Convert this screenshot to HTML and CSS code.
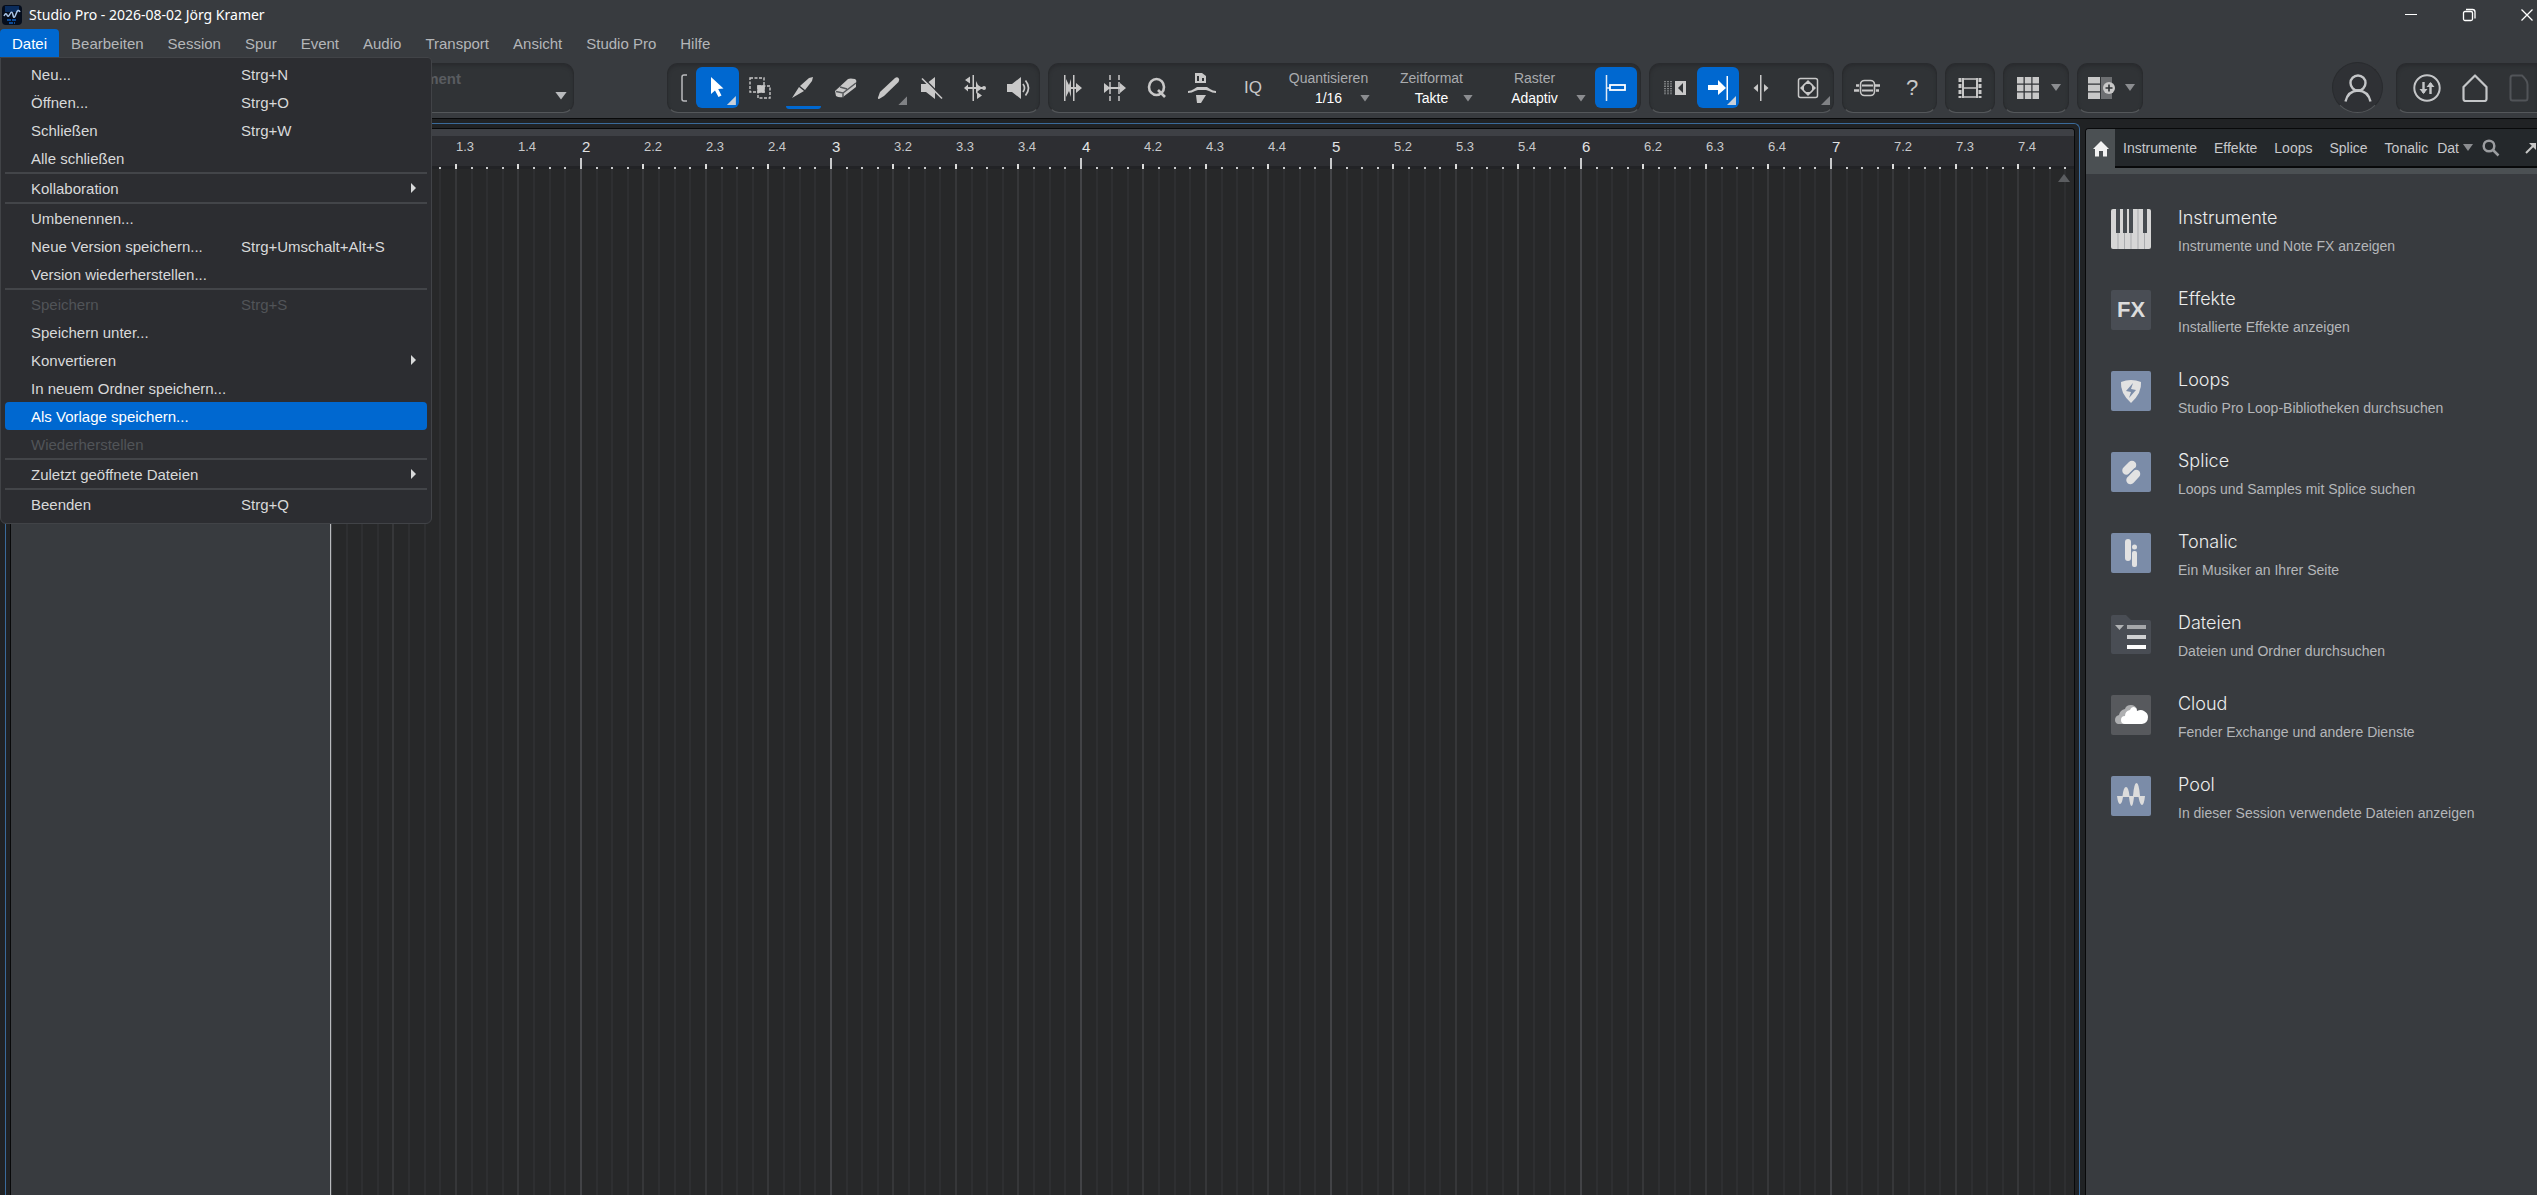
FILE: index.html
```html
<!DOCTYPE html>
<html lang="de">
<head>
    <meta charset="UTF-8">
    <title>Studio Pro - 2026-08-02 Jörg Kramer</title>
    <link rel="stylesheet" href="styles.css">
</head>
<body>

<header class="titlebar">
    <svg class="app_icon" width="20" height="20" viewBox="0 0 20 20">
        <rect width="20" height="20" rx="4" fill="#050d1c"/>
        <rect x="3" y="1" width="14" height="6" fill="#0a2c5c"/>
        <path d="M2 11q2-4 3-1t3-1 3 1 3-1 4-2" fill="none" stroke="#a9c4e6" stroke-width="1.500"/>
        <path d="M5 15h10M7 18h6" stroke="#0b4a98" stroke-width="2" stroke-dasharray="4 1"/>
    </svg>
    <span class="title">Studio Pro - 2026-08-02 Jörg Kramer</span>
    <div class="window_buttons">
        <button aria-label="Minimieren"><svg width="14" height="14" viewBox="0 0 14 14"><path d="M1 6.500h12" stroke="#fff"/></svg></button>
        <button aria-label="Verkleinern"><svg width="14" height="14" viewBox="0 0 14 14" fill="none" stroke="#fff" stroke-width="1.300"><rect x="1.500" y="3.500" width="9" height="9" rx="1.500"/><path d="M4 1.500h6.500q2.500 0 2.500 2.500v6.500"/></svg></button>
        <button aria-label="Schließen"><svg width="14" height="14" viewBox="0 0 14 14"><path d="M1.500 1.500l11 11M12.500 1.500l-11 11" stroke="#fff" stroke-width="1.300"/></svg></button>
    </div>
</header>

<nav class="menubar">
    <button class="open">Datei</button>
    <button>Bearbeiten</button>
    <button>Session</button>
    <button>Spur</button>
    <button>Event</button>
    <button>Audio</button>
    <button>Transport</button>
    <button>Ansicht</button>
    <button>Studio Pro</button>
    <button>Hilfe</button>

    <div class="menu" id="file_menu"></div>
</nav>

<div class="toolbar">
    <button class="group instrument"><span>Instrument</span><i class="arrow light"></i></button>

    <div class="group tools">
        <svg class="bracket" width="6" height="28" viewBox="0 0 6 28"><path d="M6 1H3Q1 1 1 3v22q0 2 2 2h3" fill="none" stroke="#b9bbbd" stroke-width="1.500"/></svg>
        <button class="tool active corner" aria-label="Pfeil"><svg width="24" height="24" viewBox="0 0 24 24"><path d="M6 1v17l4-3.500 3.500 6.500 3-1.500-3.300-6.500 5.300-.6z" fill="#fff"/></svg></button>
        <button class="tool" aria-label="Bereich"><svg width="22" height="22" viewBox="0 0 22 22" fill="none" stroke="#c8c8c8" stroke-width="1.400"><path d="M1 1h14v14H1zM9 9h12v12H9z" stroke-dasharray="3 1.500"/><path d="M9 9h6v6H9z" fill="#c8c8c8"/></svg></button>
        <button class="tool used" aria-label="Teilen"><svg width="24" height="24" viewBox="0 0 24 24" fill="#c8c8c8"><path d="M1 22l7-11 5 4zM9 10l9-8 4-1-1 4-7 9z"/></svg></button>
        <button class="tool" aria-label="Radierer"><svg width="24" height="24" viewBox="0 0 24 24"><path d="M1 15L14 3q2-1 7 0 2 1 1 4v4L9 21q-4 1-7-1z" fill="#c8c8c8"/><path d="M2 15.500l7 1.500L22 7M9 17v4.500M6 11l7 2" fill="none" stroke="#55585b" stroke-width="1.500"/></svg></button>
        <button class="tool corner" aria-label="Stift"><svg width="24" height="24" viewBox="0 0 24 24" fill="#c8c8c8"><path d="M3 16L18 2q2-1.500 3.500 0T21.500 6L7 20l-5 3q-1.500 0-1-1.500z"/></svg></button>
        <button class="tool" aria-label="Stummschalten"><svg width="24" height="24" viewBox="0 0 24 24" fill="#c8c8c8"><path d="M1 8h5l9-7v22l-9-7H1z"/><path d="M3 1.500l20 20" stroke="#303336" stroke-width="1.500"/><path d="M2 2.500l20 20" stroke="#c8c8c8" stroke-width="1.600"/></svg></button>
        <button class="tool" aria-label="Bend"><svg width="24" height="26" viewBox="0 0 24 26" fill="#c8c8c8"><path d="M9.500 0h1.500v26h-1.500zM2 5l5-3.500v7zM19 20.500l-5-3.500v7zM3 12h18v2H3zM5 9.500v7L1 13z"/><path d="M13 6l2 4 3 2v2l-3 2-2 3z"/><circle cx="21" cy="13" r="2"/></svg></button>
        <button class="tool" aria-label="Anhören"><svg width="24" height="24" viewBox="0 0 24 24"><path d="M1 8h5l9-7v22l-9-7H1z" fill="#c8c8c8"/><path d="M17 8q3 4 0 8M19.500 4.500q6 7.500 0 15" fill="none" stroke="#c8c8c8" stroke-width="1.700"/></svg></button>
    </div>

    <div class="group quantize">
        <button class="tool" aria-label="Start quantisieren"><svg width="20" height="26" viewBox="0 0 20 26" fill="#c8c8c8"><path d="M1 0h1.500v26H1zM10 0h1.500v26H10z"/><path d="M3 4l3 6v6l-3 6zM8 4v18l-2-6v-6z"/><path d="M6 12h7V8l6 5-6 5v-4H6z"/></svg></button>
        <button class="tool" aria-label="Ende quantisieren"><svg width="24" height="26" viewBox="0 0 24 26" fill="#c8c8c8"><path d="M7 0v26M16 0v26" stroke="#c8c8c8" stroke-width="1.500" stroke-dasharray="5 2"/><path d="M1 8l5 4h11V8l6 5-6 5v-4H6l-5 4z"/></svg></button>
        <button class="tool" aria-label="Quantisieren"><svg width="20" height="22" viewBox="0 0 20 22" fill="none" stroke="#c8c8c8" stroke-width="2.600"><ellipse cx="9.500" cy="10" rx="7.500" ry="8"/><path d="M11 13l7 7"/></svg></button>
        <button class="tool wide" aria-label="Groove"><svg width="28" height="30" viewBox="0 0 28 30" fill="#c8c8c8"><path d="M7 0h7l4 3v7H7z"/><path d="M9 3h2v5H9zM14 5h2v3h-2z" fill="#303336"/><path d="M0 20v-2q3 0 6-2l3-2h10l3 2q3 2 6 2v2q-4 0-7-2l-3-1h-8l-3 1q-3 2-7 2zM8 22h10l-5 8H9z"/></svg></button>
        <button class="tool wide iq">IQ</button>
        <div class="param"><label for="quant">Quantisieren</label><select id="quant"><option>1/16</option></select><i class="arrow"></i></div>
        <div class="param"><label for="timeformat">Zeitformat</label><select id="timeformat"><option>Takte</option></select><i class="arrow"></i></div>
        <div class="param raster"><label for="snapmode">Raster</label><select id="snapmode"><option>Adaptiv</option></select><i class="arrow"></i></div>
        <button class="tool active" aria-label="Einrasten"><svg width="24" height="26" viewBox="0 0 24 26"><path d="M2.500 0v26M2 13h5" stroke="#dfe9f5" stroke-width="1.500"/><rect x="6" y="10" width="15" height="5" fill="#0068d0" stroke="#fff" stroke-width="1.800"/></svg></button>
    </div>

    <div class="group nav_tools">
        <button class="tool" aria-label="Autoscroll"><svg width="22" height="16" viewBox="0 0 22 16"><path d="M1 1v14M4 1v14M7 1v14" stroke="#a9abad" stroke-width="1.300" stroke-dasharray="1.300 1"/><path d="M11 1h11v14H11z" fill="#c8c8c8"/><path d="M19 3v10l-5-5z" fill="#303336"/></svg></button>
        <button class="tool active corner" aria-label="Cursor folgt"><svg width="24" height="26" viewBox="0 0 24 26" fill="#fff"><path d="M2 10h10V5l8 8-8 7v-5H2z"/><path d="M20.500 1h1.500v24h-1.500z"/></svg></button>
        <button class="tool" aria-label="Ausrichten"><svg width="16" height="26" viewBox="0 0 16 26" fill="#c8c8c8"><path d="M7 0h1.500v26H7zM5 9v8l-4.500-4zM11 9v8l4.500-4z"/></svg></button>
        <button class="tool corner wide" aria-label="Zoom"><svg width="22" height="22" viewBox="0 0 22 22" fill="none" stroke="#c8c8c8" stroke-width="1.500"><rect x="1.500" y="1.500" width="19" height="19" rx="2"/><path d="M11 3l4 4H7zM11 19l4-4H7zM3 11l4-4v8zM19 11l-4-4v8z" fill="#c8c8c8" stroke="none"/><circle cx="11" cy="11" r="5"/></svg></button>
    </div>

    <div class="group help">
        <button class="tool wide" aria-label="Makros"><svg width="28" height="18" viewBox="0 0 28 18" fill="none" stroke="#c8c8c8" stroke-width="1.600"><rect x="7.500" y="1.500" width="14" height="15" rx="4"/><path d="M9 6.500h11M9 11.500h11" stroke-width="2"/><path d="M1 11.500h5M22 6.500h5M23 11.500h3M3 6.500h3" stroke-width="2.500"/></svg></button>
        <button class="tool question">?</button>
    </div>

    <div class="group single">
        <button class="tool" aria-label="Video"><svg width="24" height="22" viewBox="0 0 24 22" fill="none" stroke="#c8c8c8"><path d="M5 2h14M5 11h14M5 20h14" stroke-width="1.600"/><path d="M5 1v20M19 1v20" stroke-width="2"/><path d="M2 1v20M22 1v20" stroke-width="3" stroke-dasharray="4 2"/></svg></button>
    </div>

    <div class="group layout">
        <button class="tool" aria-label="Raster-Ansicht"><svg width="22" height="22" viewBox="0 0 22 22" fill="#c8c8c8"><path d="M0 0h6.500v6.500H0zM7.800 0h6.500v6.500H7.800zM15.500 0H22v6.500h-6.500zM0 7.800h6.500v6.500H0zM7.800 7.800h6.500v6.500H7.800zM15.500 7.800H22v6.500h-6.500zM0 15.500h6.500V22H0zM7.800 15.500h6.500V22H7.800zM15.500 15.500H22V22h-6.500z"/></svg></button>
        <i class="arrow"></i>
    </div>

    <div class="group layout">
        <button class="tool" aria-label="Spur hinzufügen"><svg width="28" height="22" viewBox="0 0 28 22"><path d="M13 0h11v22H13z" fill="#6d6f72"/><path d="M0 0h12v6.500H0zM0 7.800h12v6.500H0zM0 15.500h12V22H0z" fill="#c8c8c8"/><circle cx="21" cy="11" r="6" fill="#c8c8c8"/><path d="M21 7.500v7M17.500 11h7" stroke="#303336" stroke-width="1.600"/></svg></button>
        <i class="arrow"></i>
    </div>

    <button class="user" aria-label="Benutzer"><svg width="30" height="30" viewBox="0 0 30 30" fill="none" stroke="#c4c6c8" stroke-width="2.400"><circle cx="15" cy="10" r="7.500"/><path d="M2.500 28.500Q5 18 15 17.500 25 18 27.500 28.500"/></svg></button>

    <div class="group pages">
        <button aria-label="Übertragen"><svg width="28" height="28" viewBox="0 0 28 28" fill="none" stroke="#c4c6c8" stroke-width="2"><circle cx="14" cy="14" r="12.700"/><path d="M10.500 8v11M17.500 20V9" stroke-width="2.400"/><path d="M6.500 15h8l-4 5zM13.500 13h8l-4-5z" fill="#c4c6c8" stroke="none"/></svg></button>
        <button aria-label="Start"><svg width="28" height="28" viewBox="0 0 28 28" fill="none" stroke="#c4c6c8" stroke-width="2.200"><path d="M14 1.500L2.500 13v12q0 2 2 2h19q2 0 2-2V13z" stroke-linejoin="round"/></svg></button>
        <button aria-label="Song" disabled><svg width="20" height="28" viewBox="0 0 20 28" fill="none" stroke="#515458" stroke-width="2"><path d="M3.500 1.500H13q5.500 5 5.500 9V24q0 2.500-2 2.500h-13q-2 0-2-2.500V4q0-2.500 2-2.500z"/></svg></button>
    </div>
</div>

<main class="workspace">
    <section class="arranger">
        <div class="arranger_inner">
            <div class="track_list"></div>
            <div class="timeline">
                <div class="overview"></div>
                <div class="bars" id="bars"></div>
                <i class="scroll_up"></i>
            </div>
        </div>
    </section>

    <aside class="browser">
        <div class="tabs">
            <button class="home" aria-label="Start"><svg width="16" height="16" viewBox="0 0 16 16"><path d="M8 0l8 8h-2v7.500h-4V10H6v5.500H2V8H0z" fill="#f2f2f2"/></svg></button>
            <div class="tab_names">
                <a href="#instrumente">Instrumente</a>
                <a href="#effekte">Effekte</a>
                <a href="#loops">Loops</a>
                <a href="#splice">Splice</a>
                <a href="#tonalic">Tonalic</a>
                <a class="last" href="#dateien">Dat</a>
                <i class="arrow"></i>
                <svg class="search" width="18" height="18" viewBox="0 0 18 18" fill="none" stroke="#9b9da0" stroke-width="2.500"><circle cx="7" cy="7" r="5.300"/><path d="M11 11l5.500 5.500"/></svg>
                <svg class="detach" width="12" height="12" viewBox="0 0 12 12"><path d="M1 11L9 3" stroke="#c8c8c8" stroke-width="2"/><path d="M4 1h7v7z" fill="#c8c8c8"/></svg>
            </div>
        </div>

        <ul class="sources">
            <li id="instrumente">
                <svg width="40" height="40" viewBox="0 0 40 40"><rect width="40" height="40" rx="2" fill="#d6d6d6"/><path d="M7 23v17M13.500 23v17M20 23v17M27 0v40M33.500 23v17" stroke="#a9abae"/><path d="M5 0h4v24H5zM12 0h4v24h-4zM18 0h4v24h-4zM32 0h4v24h-4z" fill="#464b50"/></svg>
                <div><h2>Instrumente</h2><p>Instrumente und Note FX anzeigen</p></div>
            </li>
            <li id="effekte">
                <span class="fx">FX</span>
                <div><h2>Effekte</h2><p>Installierte Effekte anzeigen</p></div>
            </li>
            <li id="loops">
                <svg width="40" height="40" viewBox="0 0 40 40"><rect width="40" height="40" rx="2" fill="#7b8ca8"/><path d="M10 11q10-4 20 0 1 11-10 21Q9 22 10 11z" fill="#e2e2e2"/><path d="M22 12l-7 8 5 1-2 6 7-8-5-1z" fill="#7b8ca8"/></svg>
                <div><h2>Loops</h2><p>Studio Pro Loop-Bibliotheken durchsuchen</p></div>
            </li>
            <li id="splice">
                <svg width="40" height="40" viewBox="0 0 40 40"><rect width="40" height="40" rx="2" fill="#7b8ca8"/><path d="M15.500 18.500L21 13M19.500 28L25 22" stroke="#e2e2e2" stroke-width="8.500" stroke-linecap="round"/><path d="M16 24.500l8-8" stroke="#7b8ca8" stroke-width="1.500"/></svg>
                <div><h2>Splice</h2><p>Loops und Samples mit Splice suchen</p></div>
            </li>
            <li id="tonalic">
                <svg width="40" height="40" viewBox="0 0 40 40"><rect width="40" height="40" rx="2" fill="#7b8ca8"/><rect x="14" y="6" width="6" height="22" rx="3" fill="#e2e2e2"/><circle cx="23.500" cy="14" r="2.500" fill="#e2e2e2"/><rect x="21" y="18" width="5" height="16" rx="2" fill="#e2e2e2"/></svg>
                <div><h2>Tonalic</h2><p>Ein Musiker an Ihrer Seite</p></div>
            </li>
            <li id="dateien">
                <svg width="40" height="40" viewBox="0 0 40 40"><path d="M2 1h13l5 5h18q2 0 2 2v30q0 2-2 2H2q-2 0-2-2V3q0-2 2-2z" fill="#494d54"/><path d="M4 11h9l-4.500 5z" fill="#b0b2b4"/><path d="M16 11h19v4H16z" fill="#a5a7aa"/><path d="M16 21h19v4H16z" fill="#cfd0d2"/><path d="M16 31h19v4H16z" fill="#fff"/></svg>
                <div><h2>Dateien</h2><p>Dateien und Ordner durchsuchen</p></div>
            </li>
            <li id="cloud">
                <svg width="40" height="40" viewBox="0 0 40 40"><rect width="40" height="40" rx="2" fill="#57595d"/><path d="M7 29q-3-1-3-4 0-4 4-5 1-5 6-6 1-4 6-4 4 0 6 4l-8 15z" fill="#aeafb1"/><path d="M14 29q-4 0-4-4t4-4q0-5 5-6 1-3 4-3 3 1 3 4 4-2 7 0 4 2 4 6 0 6-6 7z" fill="#fff"/></svg>
                <div><h2>Cloud</h2><p>Fender Exchange und andere Dienste</p></div>
            </li>
            <li id="pool">
                <svg width="40" height="40" viewBox="0 0 40 40"><rect width="40" height="40" rx="2" fill="#7b8ca8"/><path d="M6 20h5.500q1-9 3.500-9t3.500 9H22q1-13 3.500-13T29 20h5q-1 9-3 9t-3.500-8H23q-1 9-2.500 9T18 21h-6q-1 7-3 7t-3-8z" fill="#dcdcdc"/></svg>
                <div><h2>Pool</h2><p>In dieser Session verwendete Dateien anzeigen</p></div>
            </li>
        </ul>
    </aside>
</main>

<script>
    // null = separator line
    let fileMenu = [
        {name: "Neu...", key: "Strg+N"},
        {name: "Öffnen...", key: "Strg+O"},
        {name: "Schließen", key: "Strg+W"},
        {name: "Alle schließen"},
        null,
        {name: "Kollaboration", sub: true},
        null,
        {name: "Umbenennen..."},
        {name: "Neue Version speichern...", key: "Strg+Umschalt+Alt+S"},
        {name: "Version wiederherstellen..."},
        null,
        {name: "Speichern", key: "Strg+S", disabled: true},
        {name: "Speichern unter..."},
        {name: "Konvertieren", sub: true},
        {name: "In neuem Ordner speichern..."},
        {name: "Als Vorlage speichern...", selected: true},
        {name: "Wiederherstellen", disabled: true},
        null,
        {name: "Zuletzt geöffnete Dateien", sub: true},
        null,
        {name: "Beenden", key: "Strg+Q"}
    ];

    function showMenu(items) {
        let data = "";
        for (let item of items) {
            if (item === null) {
                data += '<hr>';
                continue;
            }
            data += '<button' + (item.selected ? ' class="selected"' : '') + (item.disabled ? ' disabled' : '') + '>';
            data += '<span>' + item.name + '</span>';
            data += '<span>' + (item.key || '') + '</span>';
            data += item.sub ? '<i class="sub_arrow"></i>' : '';
            data += '</button>';
        }
        document.getElementById("file_menu").innerHTML = data;
    }

    function showBars(count) {
        let data = "";
        for (let bar = 1; bar <= count; bar++) {
            data += '<div class="bar"><div class="ruler">';
            data += '<b>' + bar + '</b>';
            for (let beat = 2; beat <= 4; beat++) {
                data += '<span>' + bar + '.' + beat + '</span>';
            }
            data += '</div><div class="ticks"></div><div class="lanes"></div></div>';
        }
        document.getElementById("bars").innerHTML = data;
    }

    showMenu(fileMenu);
    showBars(7);
</script>
</body>
</html>
```
FILE: styles.css
```css
* {
    box-sizing: border-box;
}

body {
    margin: 0;
    height: 100vh;
    display: flex;
    flex-direction: column;
    overflow: hidden;
    background-color: #202224;
    color: #c8c9cb;
    font-family: "Liberation Sans", Arial, sans-serif;
    font-size: 15px;
}

button {
    padding: 0;
    border: none;
    background: none;
    color: inherit;
    font: inherit;
}

svg {
    display: block;
    flex: none;
}

.titlebar {
    display: flex;
    align-items: center;
    height: 29px;
    padding-left: 2px;
    background-color: #383b3f;
}

.title {
    margin-left: 7px;
    color: #fff;
    font-family: "Noto Sans", sans-serif;
    font-size: 14px;
}

.window_buttons {
    display: flex;
    gap: 44px;
    margin-left: auto;
    padding-right: 3px;
}

.menubar {
    position: relative;
    z-index: 2;
    display: flex;
    height: 28px;
    background-color: #383b3f;
    color: #b4b6b9;
}

.menubar > button {
    padding: 0 12px;
}

.menubar > .open {
    background-color: #0068d0;
    color: #fff;
    border-radius: 4px 4px 0 0;
}

.menu {
    position: absolute;
    top: 28px;
    left: 0;
    width: 432px;
    padding: 2px 4px 5px;
    background-color: #2c2d31;
    border: 1px solid #414347;
    border-radius: 0 4px 6px 6px;
    color: #d8d9da;
}

.menu button {
    display: grid;
    grid-template-columns: 210px 1fr 16px;
    align-items: center;
    width: 100%;
    height: 28px;
    padding-left: 26px;
    text-align: left;
}

.menu button:disabled {
    color: #515458;
}

.menu .selected {
    background-color: #0068d0;
    color: #fff;
    border-radius: 4px;
}

.menu hr {
    height: 2px;
    margin: 0;
    border: none;
    background-color: #434549;
}

.sub_arrow {
    width: 5px;
    height: 10px;
    background-color: #d8d9da;
    clip-path: polygon(0 0, 100% 50%, 0 100%);
}

/* toolbar */

.toolbar {
    display: flex;
    align-items: center;
    gap: 8px;
    height: 62px;
    background-color: #383b3f;
    border-bottom: 1px solid #08090a;
}

.group {
    display: flex;
    align-items: center;
    flex: none;
    height: 50px;
    background-color: #303336;
    border: 1px solid #292b2e;
    border-bottom-color: #54575a;
    border-radius: 11px;
    box-shadow: inset 0 2px 3px #2a2c2f;
}

.instrument {
    width: 566px;
    margin-left: 8px;
    margin-right: 85px;
    padding: 0 6px 0 0;
    justify-content: flex-end;
    color: #595c60;
    font-weight: bold;
}

.instrument span {
    padding-right: 94px;
    padding-bottom: 18px;
}

.instrument .arrow {
    margin-top: 16px;
}

.arrow {
    flex: none;
    width: 10px;
    height: 7px;
    background-color: #8b8d90;
    clip-path: polygon(0 0, 100% 0, 50% 100%);
}

.arrow.light {
    width: 12px;
    height: 8px;
    background-color: #b9bbbd;
}

.tool {
    position: relative;
    display: flex;
    align-items: center;
    justify-content: center;
    width: 42px;
    height: 41px;
}

.tool.wide {
    width: 48px;
}

.tool.active {
    background-color: #0068d0;
    border-radius: 6px;
}

.tool.corner::after {
    content: "";
    position: absolute;
    right: 3px;
    bottom: 3px;
    width: 9px;
    height: 9px;
    background-color: #808285;
    clip-path: polygon(100% 0, 100% 100%, 0 100%);
}

.tool.active.corner::after {
    background-color: #c8d0da;
}

.tool.used::after {
    content: "";
    position: absolute;
    left: 4px;
    right: 4px;
    bottom: -1px;
    height: 3px;
    background-color: #0068d0;
    border-radius: 0 0 3px 3px;
}

.tools {
    width: 373px;
}

.tools .tool {
    width: 43px;
}

.bracket {
    margin: 0 9px 0 13px;
}

.quantize {
    width: 593px;
    padding: 0 3px;
}

.iq {
    margin-left: 3px;
    font-size: 17px;
    color: #c8c8c8;
}

.param {
    position: relative;
    display: flex;
    flex-direction: column;
    align-items: center;
    gap: 4px;
    width: 103px;
    font-size: 14px;
    line-height: 16px;
    color: #a9abae;
}

.param select {
    width: 64px;
    padding: 0;
    border: none;
    appearance: none;
    background: none;
    color: #fff;
    font: inherit;
    text-align-last: center;
}

.param .arrow {
    position: absolute;
    right: 10px;
    bottom: 4px;
}

.raster .arrow {
    right: 0;
}

.quantize .tool.active {
    margin-left: auto;
}

.nav_tools {
    width: 185px;
    padding-left: 4px;
    gap: 1px;
}

.nav_tools .wide {
    width: 50px;
}

.help {
    width: 95px;
}

.question {
    font-size: 22px;
    color: #c8c8c8;
}

.single {
    width: 50px;
    padding-left: 3px;
}

.layout {
    width: 66px;
    padding-left: 3px;
    gap: 2px;
}

.user {
    display: flex;
    flex: none;
    align-items: center;
    justify-content: center;
    width: 51px;
    height: 51px;
    margin-left: auto;
    margin-right: 5px;
    background-color: #2f3135;
    border: 1px solid #292b2e;
    border-bottom-color: #54575a;
    border-radius: 50%;
}

.pages {
    gap: 20px;
    width: 141px;
    padding-left: 16px;
    border-right: none;
    border-radius: 11px 0 0 11px;
    overflow: hidden;
}

/* arranger */

.workspace {
    display: flex;
    flex: 1;
    min-height: 0;
    padding-top: 4px;
}

.arranger {
    flex: 1;
    min-width: 0;
    margin-left: 5px;
    padding: 4px 4px 0;
    border: 1px solid #3a6a9a;
    border-bottom: none;
    border-radius: 6px 6px 0 0;
}

.arranger_inner {
    display: flex;
    height: 100%;
    border: 1px solid #08090a;
    border-bottom: none;
    border-radius: 4px 4px 0 0;
    overflow: hidden;
}

/* the bright edge stays on top of the first bar line */
.track_list {
    position: relative;
    z-index: 1;
    flex: none;
    width: 320px;
    background-color: #383b3f;
    border-right: 1px solid #b9bbbd;
}

.timeline {
    position: relative;
    display: flex;
    flex: 1;
    flex-direction: column;
    min-width: 0;
    background-color: #272829;
}

.overview {
    height: 7px;
    background-color: #3e4045;
}

.bars {
    display: flex;
    flex: 1;
    margin-left: -1px;
    overflow: hidden;
}

.bar {
    display: flex;
    flex: none;
    flex-direction: column;
    width: 250px;
}

.ruler {
    display: grid;
    grid-template-columns: repeat(4, 1fr);
    height: 30px;
    padding-left: 2px;
    background-color: #2d2e32;
    font-size: 13px;
    line-height: 22px;
}

.ruler b {
    color: #e2e3e4;
    font-size: 15px;
    font-weight: normal;
}

/* three heights of tick: bar, beat, sixteenth */
.ticks {
    height: 11px;
    margin-top: -8px;
    background:
        linear-gradient(#c8c9cb, #c8c9cb) 0 0 / 2px 11px no-repeat,
        repeating-linear-gradient(to right, #dcdcdc 0 2px, transparent 2px 25%) 0 6px / 100% 5px no-repeat,
        repeating-linear-gradient(to right, #c8c9cb 0 2px, transparent 2px 6.25%) 0 9px / 100% 2px no-repeat,
        linear-gradient(#222326, #222326) 0 8px / 100% 3px no-repeat;
}

.lanes {
    flex: 1;
    background:
        linear-gradient(#424346, #424346) 0 0 / 2px 100% no-repeat,
        repeating-linear-gradient(to right, #363739 0 2px, transparent 2px 25%),
        repeating-linear-gradient(to right, #2e2f31 0 2px, transparent 2px 6.25%);
}

.scroll_up {
    position: absolute;
    top: 45px;
    right: 4px;
    width: 12px;
    height: 8px;
    background-color: #5b5d60;
    clip-path: polygon(50% 0, 100% 100%, 0 100%);
}

/* browser */

.browser {
    flex: none;
    width: 452px;
    margin: 5px 0 0 5px;
    background-color: #383b3f;
    border-top: 1px solid #08090a;
    border-left: 1px solid #08090a;
    border-radius: 4px 0 0 0;
    overflow: hidden;
}

.tabs {
    display: flex;
    height: 45px;
    border-bottom: 6px solid #4b5053;
}

.home {
    display: flex;
    align-items: center;
    justify-content: center;
    width: 30px;
    background-color: #4b5053;
}

.tab_names {
    display: flex;
    flex: 1;
    align-items: center;
    gap: 17px;
    padding-left: 8px;
    background-color: #24282b;
    border-bottom: 2px solid #08090a;
    font-size: 14px;
}

.tab_names a {
    color: #c8c9cb;
    text-decoration: none;
}

.tab_names .last {
    margin-left: -8px;
}

.tab_names .arrow {
    margin-left: -13px;
}

.tab_names .search {
    margin-left: -8px;
}

.tab_names .detach {
    margin-left: 8px;
}

.sources {
    margin: 0;
    padding: 35px 0 0 25px;
    list-style: none;
}

.sources li {
    display: flex;
    gap: 27px;
    height: 81px;
}

.sources h2 {
    margin: 0;
    color: #eceded;
    font-family: Inter, "Liberation Sans", sans-serif;
    font-size: 18px;
    font-weight: 300;
    line-height: 18px;
}

.sources p {
    margin: 11px 0 0;
    color: #b4b6b9;
    font-size: 14px;
    line-height: 16px;
}

.fx {
    width: 40px;
    height: 40px;
    background-color: #494d54;
    border-radius: 2px;
    color: #dcdcdc;
    font-size: 22px;
    font-weight: bold;
    line-height: 40px;
    text-align: center;
}
```
